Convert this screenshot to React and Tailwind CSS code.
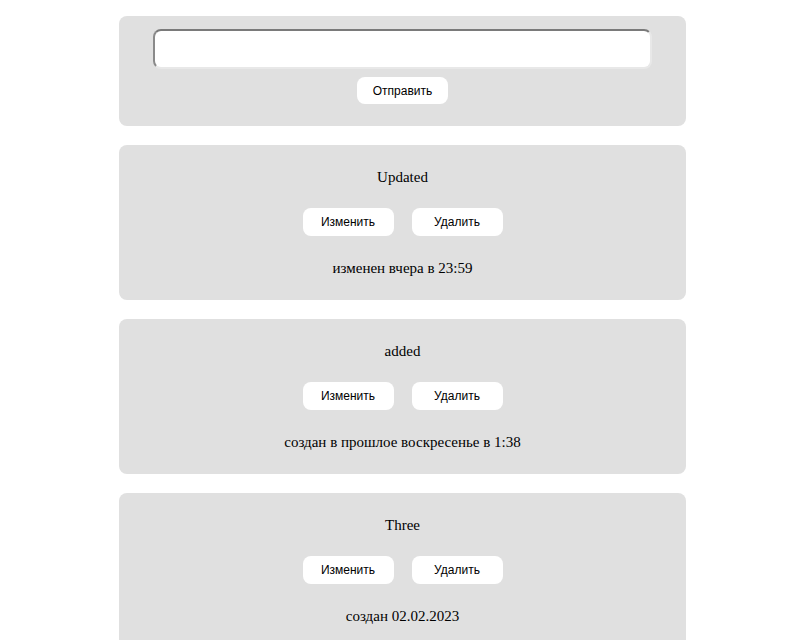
import React from "react";

const notes = [
  { id: 1, text: "Updated", date: "изменен вчера в 23:59" },
  { id: 2, text: "added", date: "создан в прошлое воскресенье в 1:38" },
  { id: 3, text: "Three", date: "создан 02.02.2023" },
];

const btn =
  "w-[91px] h-[28px] bg-white rounded-lg text-[12px] text-black font-['Liberation_Sans',Arial,sans-serif]";

const App = () => {
  return (
    <div className="pl-[5px]">
      <div className="w-[567px] mx-auto pt-4 flex flex-col gap-[19px] font-['Liberation_Serif','Times_New_Roman',serif] text-black">
        <div className="bg-[#e0e0e0] rounded-lg flex flex-col items-center pt-[13px] pb-[22px] gap-2">
          <textarea className="w-[499px] h-[40px] bg-white rounded-lg border-2 border-t-[#7a7a7a] border-l-[#8a8a8a] border-r-[#e8e8e8] border-b-[#e8e8e8] resize-none" />
          <button className="w-[91px] h-[27px] bg-white rounded-lg text-[12px] font-['Liberation_Sans',Arial,sans-serif]">
            Отправить
          </button>
        </div>
        {notes.map((note) => (
          <div
            key={note.id}
            className="bg-[#e0e0e0] rounded-lg flex flex-col items-center pt-[23px] pb-[23px] gap-[22px] text-[15px] leading-[18px]"
          >
            <p>{note.text}</p>
            <div className="flex gap-[18px]">
              <button className={btn}>Изменить</button>
              <button className={btn}>Удалить</button>
            </div>
            <p className="mt-px">{note.date}</p>
          </div>
        ))}
      </div>
    </div>
  );
};

export default App;
